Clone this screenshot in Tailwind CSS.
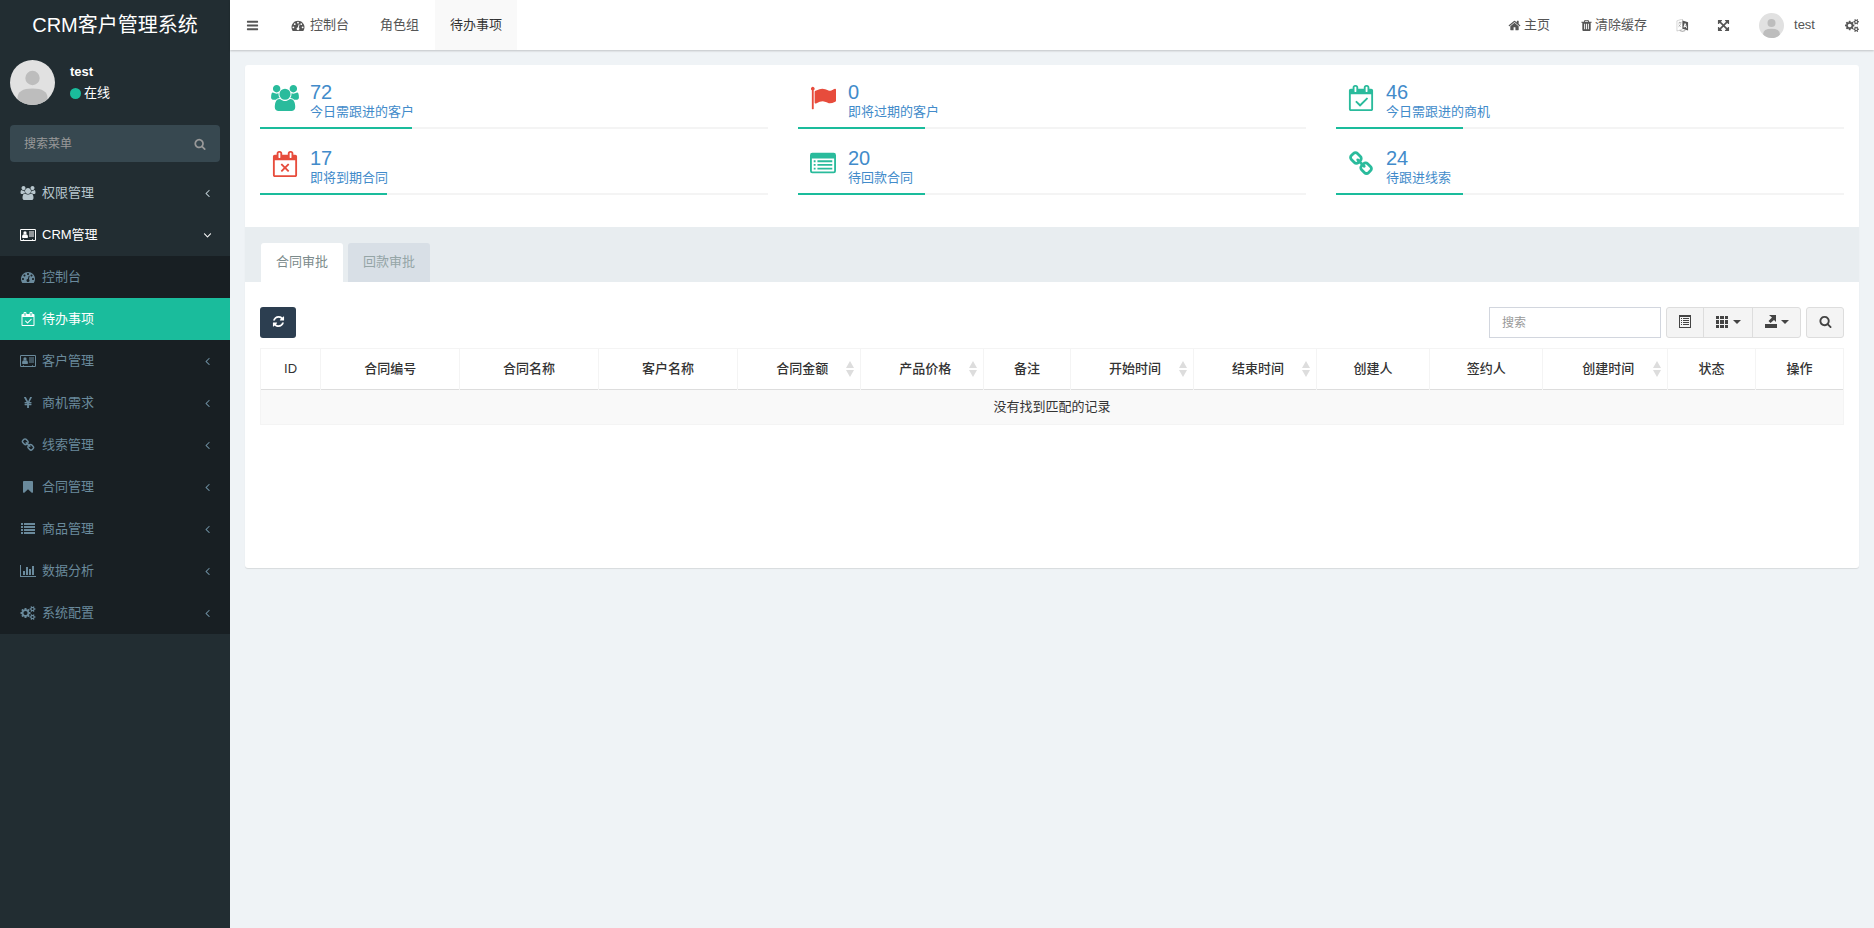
<!DOCTYPE html>
<html lang="zh-CN">
<head>
<meta charset="utf-8">
<title>CRM客户管理系统</title>
<script src="https://cdn.jsdelivr.net/npm/@tailwindcss/browser@4"></script>
</head>
<body class="flex min-h-screen bg-[#eff3f6] font-['Liberation_Sans','Noto_Sans_CJK_SC',sans-serif] text-[13px] leading-5 text-[#333]">
<svg class="hidden" aria-hidden="true">
  <symbol id="bars" viewBox="0 0 1792 1792"><path d="M1664 1344v128q0 26-19 45t-45 19h-1408q-26 0-45-19t-19-45v-128q0-26 19-45t45-19h1408q26 0 45 19t19 45zm0-512v128q0 26-19 45t-45 19h-1408q-26 0-45-19t-19-45v-128q0-26 19-45t45-19h1408q26 0 45 19t19 45zm0-512v128q0 26-19 45t-45 19h-1408q-26 0-45-19t-19-45v-128q0-26 19-45t45-19h1408q26 0 45 19t19 45z"/></symbol>
  <symbol id="dash" viewBox="0 0 1792 1792"><path d="M384 1152q0-53-37.5-90.5t-90.5-37.5-90.5 37.5-37.5 90.5 37.5 90.5 90.5 37.5 90.5-37.5 37.5-90.5zm192-448q0-53-37.5-90.5t-90.5-37.5-90.5 37.5-37.5 90.5 37.5 90.5 90.5 37.5 90.5-37.5 37.5-90.5zm428 481l101-382q6-26-7.5-48.5t-38.5-29.5-48 6.5-30 39.5l-101 382q-60 5-107 43.5t-63 98.5q-20 77 20 146t117 89 146-20 89-117q16-60-6-117t-72-91zm660-33q0-53-37.5-90.5t-90.5-37.5-90.5 37.5-37.5 90.5 37.5 90.5 90.5 37.5 90.5-37.5 37.5-90.5zm-640-640q0-53-37.5-90.5t-90.5-37.5-90.5 37.5-37.5 90.5 37.5 90.5 90.5 37.5 90.5-37.5 37.5-90.5zm448 192q0-53-37.5-90.5t-90.5-37.5-90.5 37.5-37.5 90.5 37.5 90.5 90.5 37.5 90.5-37.5 37.5-90.5zm320 448q0 261-141 483-19 29-54 29h-1402q-35 0-54-29-141-221-141-483 0-182 71-348t191-286 286-191 348-71 348 71 286 191 191 286 71 348z"/></symbol>
  <symbol id="search" viewBox="0 0 1792 1792"><path d="M1216 832q0-185-131.500-316.500t-316.500-131.500-316.500 131.500-131.500 316.500 131.500 316.500 316.500 131.500 316.500-131.500 131.500-316.500zm512 832q0 52-38 90t-90 38q-54 0-90-38l-343-342q-179 124-399 124-143 0-273.500-55.500t-225-150-150-225-55.500-273.500 55.500-273.500 150-225 225-150 273.500-55.500 273.500 55.500 225 150 150 225 55.500 273.500q0 220-124 399l343 343q37 37 37 90z"/></symbol>
  <symbol id="left" viewBox="0 0 1792 1792"><path d="M1203 544q0 13-10 23l-393 393 393 393q10 10 10 23t-10 23l-50 50q-10 10-23 10t-23-10l-466-466q-10-10-10-23t10-23l466-466q10-10 23-10t23 10l50 50q10 10 10 23z"/></symbol>
  <symbol id="down" viewBox="0 0 1792 1792"><path d="M1395 736q0 13-10 23l-466 466q-10 10-23 10t-23-10l-466-466q-10-10-10-23t10-23l50-50q10-10 23-10t23 10l393 393 393-393q10-10 23-10t23 10l50 50q10 10 10 23z"/></symbol>
  <symbol id="bookmark" viewBox="0 0 1792 1792"><path d="M1420 128q23 0 44 9 33 13 52.500 41t19.500 62v1289q0 34-19.500 62t-52.500 41q-19 8-44 8-48 0-83-32l-441-424-441 424q-36 33-83 33-23 0-44-9-33-13-52.500-41t-19.500-62v-1289q0-34 19.500-62t52.500-41q21-9 44-9h1048z"/></symbol>
  <symbol id="home" viewBox="0 0 1792 1792"><path d="M1472 992v480q0 26-19 45t-45 19h-384v-384h-256v384h-384q-26 0-45-19t-19-45v-480q0-1 .5-3t.5-3l575-474 575 474q1 2 1 6zm223-69l-62 74q-8 9-21 11h-3q-13 0-21-7l-692-577-692 577q-12 8-24 7-13-2-21-11l-62-74q-8-10-7-23.500t11-21.500l719-599q32-26 76-26t76 26l244 204v-195q0-14 9-23t23-9h192q14 0 23 9t9 23v408l219 182q10 8 11 21.500t-7 23.500z"/></symbol>
  <symbol id="refresh" viewBox="0 0 1792 1792"><path d="M1639 1056q0 5-1 7-64 268-268 434.500t-478 166.500q-146 0-282.500-55t-243.500-157l-129 129q-19 19-45 19t-45-19-19-45v-448q0-26 19-45t45-19h448q26 0 45 19t19 45-19 45l-137 137q71 66 161 102t187 36q134 0 250-65t186-179q11-17 53-117 8-23 30-23h192q13 0 22.500 9.500t9.500 22.500zm25-800v448q0 26-19 45t-45 19h-448q-26 0-45-19t-19-45 19-45l138-138q-148-137-349-137-134 0-250 65t-186 179q-11 17-53 117-8 23-30 23h-199q-13 0-22.500-9.500t-9.500-22.500v-7q65-268 270-434.500t480-166.500q146 0 284 55.500t245 156.500l130-129q19-19 45-19t45 19 19 45z"/></symbol>
  <symbol id="link" viewBox="0 0 1792 1792"><path d="M1520 1216q0-40-28-68l-208-208q-28-28-68-28-42 0-72 32 3 3 19 18.500t21.500 21.500 15 19 13 25.500 3.500 27.500q0 40-28 68t-68 28q-15 0-27.500-3.500t-25.500-13-19-15-21.500-21.500-18.500-19q-33 31-33 73 0 40 28 68l206 207q27 27 68 27 40 0 68-26l147-146q28-28 28-67zm-703-705q0-40-28-68l-206-207q-28-28-68-28-39 0-68 27l-147 146q-28 28-28 67 0 40 28 68l208 208q27 27 68 27 42 0 72-31-3-3-19-18.500t-21.500-21.500-15-19-13-25.500-3.500-27.500q0-40 28-68t68-28q15 0 27.500 3.500t25.500 13 19 15 21.500 21.500 18.500 19q33-31 33-73zm895 705q0 120-85 203l-147 146q-83 83-203 83-121 0-204-85l-206-207q-83-83-83-203 0-123 88-209l-88-88q-86 88-208 88-120 0-204-84l-208-208q-84-84-84-204t85-203l147-146q83-83 203-83 121 0 204 85l206 207q83 83 83 203 0 123-88 209l88 88q86-88 208-88 120 0 204 84l208 208q84 84 84 204z"/></symbol>
  <symbol id="flag" viewBox="0 0 1792 1792"><path d="M320 256q0 72-64 110v1266q0 13-9.500 22.500t-22.500 9.500h-64q-13 0-22.500-9.500t-9.500-22.500v-1266q-64-38-64-110 0-53 37.500-90.500t90.500-37.500 90.500 37.500 37.500 90.500zm1472 64v763q0 25-12.500 38.500t-39.500 27.500q-215 116-369 116-61 0-123.500-22t-108.500-48-115.500-48-142.500-22q-192 0-464 146-17 9-33 9-26 0-45-19t-19-45v-742q0-32 31-55 21-14 79-43 236-120 421-120 107 0 200 29t219 88q38 19 88 19 54 0 117.500-21t110-47 88-47 54.500-21q26 0 45 19t19 45z"/></symbol>
  <symbol id="users" viewBox="0 0 1920 1792"><path d="M593 896q-162 5-265 128h-134q-82 0-138-40.500t-56-118.500q0-353 124-353 6 0 43.500 21t97.500 42.500 119 21.500q67 0 133-23-5 37-5 66 0 139 81 256zm1071 637q0 120-73 189.500t-194 69.500h-874q-121 0-194-69.500t-73-189.500q0-53 3.500-103.500t14-109 26.500-108.500 43-97.500 62-81 85.500-53.500 111.500-20q10 0 43 21.500t73 48 107 48 135 21.500 135-21.500 107-48 73-48 43-21.500q61 0 111.500 20t85.500 53.500 62 81 43 97.500 26.500 108.500 14 109 3.500 103.500zm-1024-1277q0 106-75 181t-181 75-181-75-75-181 75-181 181-75 181 75 75 181zm704 384q0 159-112.500 271.500t-271.500 112.500-271.500-112.500-112.500-271.500 112.500-271.500 271.500-112.500 271.500 112.500 112.500 271.500zm576 225q0 78-56 118.500t-138 40.500h-134q-103-123-265-128 81-117 81-256 0-29-5-66 66 23 133 23 59 0 119-21.500t97.500-42.500 43.500-21q124 0 124 353zm-128-609q0 106-75 181t-181 75-181-75-75-181 75-181 181-75 181 75 75 181z"/></symbol>
  <symbol id="cal-check" viewBox="0 0 1664 1792"><path d="M1303 964l-512 512q-10 9-23 9t-23-9l-288-288q-9-10-9-23t9-22l46-46q9-9 22-9t23 9l220 220 444-444q10-9 23-9t22 9l46 46q9 9 9 22t-9 23zm-1175 700h1408v-1024h-1408v1024zm384-1216v-288q0-14-9-23t-23-9h-64q-14 0-23 9t-9 23v288q0 14 9 23t23 9h64q14 0 23-9t9-23zm768 0v-288q0-14-9-23t-23-9h-64q-14 0-23 9t-9 23v288q0 14 9 23t23 9h64q14 0 23-9t9-23zm384-64v1280q0 52-38 90t-90 38h-1408q-52 0-90-38t-38-90v-1280q0-52 38-90t90-38h128v-96q0-66 47-113t113-47h64q66 0 113 47t47 113v96h384v-96q0-66 47-113t113-47h64q66 0 113 47t47 113v96h128q52 0 90 38t38 90z"/></symbol>
  <symbol id="cal-times" viewBox="0 0 1664 1792"><path d="M1111 1385l-46 46q-9 9-22 9t-23-9l-188-189-188 189q-10 9-23 9t-22-9l-46-46q-9-9-9-22t9-23l189-188-189-188q-9-10-9-23t9-22l46-46q9-9 22-9t23 9l188 188 188-188q10-9 23-9t22 9l46 46q9 9 9 22t-9 23l-188 188 188 188q9 10 9 23t-9 22zM128 1664h1408v-1024h-1408v1024zm384-1216v-288q0-14-9-23t-23-9h-64q-14 0-23 9t-9 23v288q0 14 9 23t23 9h64q14 0 23-9t9-23zm768 0v-288q0-14-9-23t-23-9h-64q-14 0-23 9t-9 23v288q0 14 9 23t23 9h64q14 0 23-9t9-23zm384-64v1280q0 52-38 90t-90 38h-1408q-52 0-90-38t-38-90v-1280q0-52 38-90t90-38h128v-96q0-66 47-113t113-47h64q66 0 113 47t47 113v96h384v-96q0-66 47-113t113-47h64q66 0 113 47t47 113v96h128q52 0 90 38t38 90z"/></symbol>
  <symbol id="list-alt" viewBox="0 0 1792 1792"><path fill-rule="evenodd" d="M160 128h1472q160 0 160 160v1088q0 160-160 160h-1472q-160 0-160-160v-1088q0-160 160-160zM128 512v864q0 32 32 32h1472q32 0 32-32v-864zM256 640h128v128h-128zM256 896h128v128h-128zM256 1152h128v128h-128zM512 640h1024v128h-1024zM512 896h1024v128h-1024zM512 1152h1024v128h-1024z"/></symbol>
  <symbol id="card" viewBox="0 0 2048 1792"><path fill-rule="evenodd" d="M160 128h1728q160 0 160 160v1216q0 160-160 160h-1728q-160 0-160-160v-1216q0-160 160-160zM128 256v1248q0 32 32 32h224v-64q0-32 32-32h64q32 0 32 32v64h1024v-64q0-32 32-32h64q32 0 32 32v64h224q32 0 32-32v-1248z"/><circle cx="640" cy="640" r="210"/><path d="M500 800q140 110 280 0 244 20 244 340 0 140-120 140h-528q-120 0-120-140 0-320 244-340zM1152 448h640v128h-640zM1152 704h640v128h-640zM1152 960h640v128h-640z"/></symbol>
  <symbol id="yen" viewBox="0 0 1792 1792"><path d="M985.500 1536h-172q-13 0-22.500-9t-9.500-23v-330h-288q-13 0-22.500-9t-9.500-23v-103q0-13 9.500-22.500t22.500-9.500h288v-85h-288q-13 0-22.500-9t-9.500-23v-104q0-13 9.500-22.500t22.500-9.500h214l-321-578q-8-16 0-32 10-16 28-16h194q19 0 29 18l215 425q19 38 56 125 10-24 30.500-68t27.500-61l191-420q8-19 29-19h191q17 0 27 16 9 14 1 31l-313 579h215q13 0 22.500 9.500t9.500 22.500v104q0 14-9.500 23t-22.500 9h-290v85h290q13 0 22.500 9.500t9.500 22.500v103q0 14-9.500 23t-22.500 9h-290v330q0 13-9.500 22.500t-22.500 9.500z"/></symbol>
  <symbol id="list" viewBox="0 0 1792 1792"><path d="M0 128h256v256h-256zM384 128h1408v256h-1408zM0 512h256v256h-256zM384 512h1408v256h-1408zM0 896h256v256h-256zM384 896h1408v256h-1408zM0 1280h256v256h-256zM384 1280h1408v256h-1408z"/></symbol>
  <symbol id="chart" viewBox="0 0 2048 1792"><path d="M640 896v512h-256v-512h256zm384-512v1024h-256v-1024h256zm1024 1152v128h-2048v-1536h128v1408h1920zm-640-896v768h-256v-768h256zm384-384v1152h-256v-1152h256z"/></symbol>
  <symbol id="cogs" viewBox="0 0 1920 1792"><path d="M896 896q0-106-75-181t-181-75-181 75-75 181 75 181 181 75 181-75 75-181zm768 512q0-52-38-90t-90-38-90 38-38 90q0 53 37.500 90.500t90.500 37.500 90.500-37.500 37.500-90.500zm0-1024q0-52-38-90t-90-38-90 38-38 90q0 53 37.500 90.500t90.500 37.500 90.500-37.500 37.500-90.500zm-384 421v185q0 10-7 19.500t-16 10.500l-155 24q-11 35-32 76 34 48 90 115 7 11 7 20 0 12-7 19-23 30-82.500 89.500t-78.500 59.500q-11 0-21-7l-115-90q-37 19-77 31-11 108-23 155-7 24-30 24h-186q-11 0-20-7.500t-10-17.500l-23-153q-34-10-75-31l-118 89q-7 7-20 7-11 0-21-8-144-133-144-160 0-9 7-19 10-14 41-53t47-61q-23-44-35-82l-152-24q-10-1-17-9.500t-7-19.500v-185q0-10 7-19.500t16-10.500l155-24q11-35 32-76-34-48-90-115-7-11-7-20 0-12 7-20 22-30 82-89t79-59q11 0 21 7l115 90q34-18 77-32 11-108 23-154 7-24 30-24h186q11 0 20 7.500t10 17.500l23 153q34 10 75 31l118-89q8-7 20-7 11 0 21 8 144 133 144 160 0 8-7 19-12 16-42 54t-45 60q23 48 34 82l152 23q10 2 17 10.500t7 19.500zm640 533v140q0 16-149 31-12 27-30 52 51 113 51 138 0 4-4 7-122 71-124 71-8 0-46-47t-52-68q-20 2-30 2t-30-2q-14 21-52 68t-46 47q-2 0-124-71-4-3-4-7 0-25 51-138-18-25-30-52-149-15-149-31v-140q0-16 149-31 13-29 30-52-51-113-51-138 0-4 4-7 4-2 35-20t59-34 30-16q8 0 46 46.500t52 67.500q20-2 30-2t30 2q51-71 92-112l6-2q4 0 124 70 4 3 4 7 0 25-51 138 17 23 30 52 149 15 149 31zm0-1024v140q0 16-149 31-12 27-30 52 51 113 51 138 0 4-4 7-122 71-124 71-8 0-46-47t-52-68q-20 2-30 2t-30-2q-14 21-52 68t-46 47q-2 0-124-71-4-3-4-7 0-25 51-138-18-25-30-52-149-15-149-31v-140q0-16 149-31 13-29 30-52-51-113-51-138 0-4 4-7 4-2 35-20t59-34 30-16q8 0 46 46.500t52 67.500q20-2 30-2t30 2q51-71 92-112l6-2q4 0 124 70 4 3 4 7 0 25-51 138 17 23 30 52 149 15 149 31z"/></symbol>
  <symbol id="trash" viewBox="0 0 1792 1792"><path d="M704 1376v-704q0-14-9-23t-23-9h-64q-14 0-23 9t-9 23v704q0 14 9 23t23 9h64q14 0 23-9t9-23zm256 0v-704q0-14-9-23t-23-9h-64q-14 0-23 9t-9 23v704q0 14 9 23t23 9h64q14 0 23-9t9-23zm256 0v-704q0-14-9-23t-23-9h-64q-14 0-23 9t-9 23v704q0 14 9 23t23 9h64q14 0 23-9t9-23zm-544-992h448l-48-117q-7-9-17-11h-317q-10 2-17 11zm928 32v64q0 14-9 23t-23 9h-96v948q0 83-47 143.500t-113 60.500h-832q-66 0-113-58.500t-47-141.500v-952h-96q-14 0-23-9t-9-23v-64q0-14 9-23t23-9h309l70-167q15-37 54-63t79-26h320q40 0 79 26t54 63l70 167h309q14 0 23 9t9 23z"/></symbol>
  <symbol id="arrows" viewBox="0 0 1792 1792"><path d="M1411 541l-355 355 355 355 144-144q29-31 70-14 39 17 39 59v448q0 26-19 45t-45 19h-448q-42 0-59-40-17-39 14-69l144-144-355-355-355 355 144 144q31 30 14 69-17 40-59 40h-448q-26 0-45-19t-19-45v-448q0-42 40-59 39-17 69 14l144 144 355-355-355-355-144 144q-19 19-45 19-12 0-24-5-40-17-40-59v-448q0-26 19-45t45-19h448q42 0 59 40 17 39-14 69l-144 144 355 355 355-355-144-144q-31-30-14-69 17-40 59-40h448q26 0 45 19t19 45v448q0 42-39 59-13 5-25 5-26 0-45-19z"/></symbol>
  <symbol id="language" viewBox="0 0 14 14"><path d="M1 2l6-2v11l-6 2z" fill="none" stroke="currentColor" stroke-width=".5" opacity=".5"/><path d="M2.500 4.500l3.500-1M4 3v1.500M2.500 8.500q2.500-1.500 3-4.500M3 6q1 2 2.500 2.500" fill="none" stroke="currentColor" stroke-width=".6" opacity=".6"/><path fill-rule="evenodd" d="M7 1.500l6 2v9l-6-2zM9.300 4.500l-1.300 4.500 1 .3.300-1 1.300.4.400 1.100 1 .3-1.500-5.200zM9.900 6l.4 1.600-.8-.2z"/><path d="M4 12.500q3 1.500 6 0" fill="none" stroke="currentColor" stroke-width=".6"/></symbol>
  <symbol id="doc" viewBox="0 0 12 13"><path fill-rule="evenodd" d="M0 0h12v13h-12zM1 2h10v10h-10z"/><path d="M2 3h1v1h-1zM4 3h6v1h-6zM2 5h1v1h-1zM4 5h6v1h-6zM2 7h1v1h-1zM4 7h6v1h-6zM2 9h1v1h-1zM4 9h6v1h-6z"/></symbol>
  <symbol id="th" viewBox="0 0 12 12"><path d="M0 0h3v3h-3zM4 0h4v3h-4zM9 0h3v3h-3zM0 4h3v4h-3zM4 4h4v4h-4zM9 4h3v4h-3zM0 9h3v3h-3zM4 9h4v3h-4zM9 9h3v3h-3z"/></symbol>
  <symbol id="export" viewBox="0 0 12 13"><path d="M0 9h12v4h-12zM4 0h7v7l-2-2-3.500 3-2-2 3.500-3.500z"/></symbol>
  <symbol id="caret" viewBox="0 0 8 4"><path d="M0 0h8l-4 4z"/></symbol>
  <symbol id="sort" viewBox="0 0 8 16"><path d="M4 0l4 7h-8zM0 9h8l-4 7z"/></symbol>
  <symbol id="avatar" viewBox="0 0 45 45"><path fill="#e1e1e1" d="M0 0h45v45h-45z"/><circle cx="22.500" cy="18" r="7.200" fill="#bdbdbd"/><path fill="#bdbdbd" d="M7.500 38q0-9.500 15-9.500t15 9.500v7h-30z"/></symbol>
</svg>

<aside class="w-[230px] shrink-0 bg-[#222d32] text-white">
  <a href="#" class="flex h-[50px] items-center justify-center text-xl">CRM客户管理系统</a>
  <div class="flex gap-[15px] px-[10px] pt-[10px]">
    <svg class="size-[45px] rounded-full"><use href="#avatar"/></svg>
    <div class="flex flex-col gap-px pt-[2px]">
      <p class="font-bold">test</p>
      <a href="#" class="flex items-center gap-[3px]"><span class="size-[11px] rounded-full bg-[#1abc9c]"></span>在线</a>
    </div>
  </div>
  <form class="mx-[10px] mt-5 mb-[10px] flex h-[37px] items-center rounded bg-[#374850]">
    <input type="text" aria-label="搜索菜单" placeholder="搜索菜单" class="min-w-0 flex-1 px-[14px] text-xs outline-none placeholder:text-[#999]">
    <button type="button" aria-label="搜索" class="px-[14px] text-[#999]"><svg class="size-3 fill-current"><use href="#search"/></svg></button>
  </form>
  <nav>
    <a href="#" class="flex h-[42px] items-center gap-[6px] pr-4 pl-5 text-[#b8c7ce]"><svg class="h-[14px] w-4 fill-current"><use href="#users"/></svg><span class="flex-1">权限管理</span><svg class="h-4 w-[13px] fill-current"><use href="#left"/></svg></a>
    <a href="#" class="flex h-[42px] items-center gap-[6px] pr-4 pl-5"><svg class="h-[14px] w-4 fill-current"><use href="#card"/></svg><span class="flex-1">CRM管理</span><svg class="h-4 w-[13px] fill-current"><use href="#down"/></svg></a>
    <div class="bg-[#181f23] text-[#6a8a9c]">
      <a href="#" class="flex h-[42px] items-center gap-[6px] pr-4 pl-5"><svg class="h-[14px] w-4 fill-current"><use href="#dash"/></svg>控制台</a>
      <a href="#" class="flex h-[42px] items-center gap-[6px] bg-[#1abc9c] pr-4 pl-5 text-white"><svg class="h-[14px] w-4 fill-current"><use href="#cal-check"/></svg>待办事项</a>
      <a href="#" class="flex h-[42px] items-center gap-[6px] pr-4 pl-5"><svg class="h-[14px] w-4 fill-current"><use href="#card"/></svg><span class="flex-1">客户管理</span><svg class="h-4 w-[13px] fill-current"><use href="#left"/></svg></a>
      <a href="#" class="flex h-[42px] items-center gap-[6px] pr-4 pl-5"><svg class="h-[14px] w-4 fill-current"><use href="#yen"/></svg><span class="flex-1">商机需求</span><svg class="h-4 w-[13px] fill-current"><use href="#left"/></svg></a>
      <a href="#" class="flex h-[42px] items-center gap-[6px] pr-4 pl-5"><svg class="h-[14px] w-4 fill-current"><use href="#link"/></svg><span class="flex-1">线索管理</span><svg class="h-4 w-[13px] fill-current"><use href="#left"/></svg></a>
      <a href="#" class="flex h-[42px] items-center gap-[6px] pr-4 pl-5"><svg class="h-[14px] w-4 fill-current"><use href="#bookmark"/></svg><span class="flex-1">合同管理</span><svg class="h-4 w-[13px] fill-current"><use href="#left"/></svg></a>
      <a href="#" class="flex h-[42px] items-center gap-[6px] pr-4 pl-5"><svg class="h-[14px] w-4 fill-current"><use href="#list"/></svg><span class="flex-1">商品管理</span><svg class="h-4 w-[13px] fill-current"><use href="#left"/></svg></a>
      <a href="#" class="flex h-[42px] items-center gap-[6px] pr-4 pl-5"><svg class="h-[14px] w-4 fill-current"><use href="#chart"/></svg><span class="flex-1">数据分析</span><svg class="h-4 w-[13px] fill-current"><use href="#left"/></svg></a>
      <a href="#" class="flex h-[42px] items-center gap-[6px] pr-4 pl-5"><svg class="h-[14px] w-4 fill-current"><use href="#cogs"/></svg><span class="flex-1">系统配置</span><svg class="h-4 w-[13px] fill-current"><use href="#left"/></svg></a>
    </div>
  </nav>
</aside>

<div class="min-w-0 flex-1">
  <header class="flex h-[50px] justify-between bg-white text-[#555] shadow-[0_1px_2px_rgba(0,0,0,0.2)]">
    <div class="flex gap-px">
      <button type="button" aria-label="切换菜单" class="px-4"><svg class="size-[13px] fill-current"><use href="#bars"/></svg></button>
      <nav class="flex gap-px">
        <a href="#" class="flex items-center gap-[5px] px-[15px]"><svg class="h-[13px] w-[14px] fill-current"><use href="#dash"/></svg>控制台</a>
        <a href="#" class="flex items-center px-[15px]">角色组</a>
        <a href="#" class="flex items-center bg-[#f9f9f9] px-[15px] text-[#333]">待办事项</a>
      </nav>
    </div>
    <nav class="flex">
      <a href="#" class="flex items-center gap-[3px] px-[15px]"><svg class="size-[13px] fill-current"><use href="#home"/></svg>主页</a>
      <a href="#" class="flex items-center gap-[2px] px-[15px]"><svg class="size-[13px] fill-current"><use href="#trash"/></svg>清除缓存</a>
      <a href="#" aria-label="语言" class="flex items-center px-[14px]"><svg class="size-[13px] fill-current"><use href="#language"/></svg></a>
      <a href="#" aria-label="全屏" class="flex items-center px-[14px]"><svg class="size-[13px] fill-current"><use href="#arrows"/></svg></a>
      <a href="#" class="flex items-center gap-[10px] px-[15px]"><svg class="size-[25px] rounded-full"><use href="#avatar"/></svg>test</a>
      <a href="#" aria-label="设置" class="flex items-center px-[15px]"><svg class="h-[13px] w-[14px] fill-current"><use href="#cogs"/></svg></a>
    </nav>
  </header>

  <main class="p-[15px]">
    <div class="overflow-hidden rounded-[3px] bg-white shadow-[0_1px_1px_rgba(0,0,0,0.1)]">
      <section class="grid grid-cols-3 gap-x-[30px] gap-y-[2px] px-[15px] pb-8 text-[#428bca]">
        <div class="flex h-16 flex-col"><a href="#" class="flex flex-1 items-center gap-[10px] pt-1 pl-[10px]"><svg class="h-[26px] w-[30px] fill-[#2abb9c]"><use href="#users"/></svg><span class="flex flex-col pt-2"><span class="text-xl leading-5">72</span><span>今日需跟进的客户</span></span></a><div class="h-[2px] bg-[#f4f4f4]"><div class="h-full bg-[#1abc9c]" style="width:30%"></div></div></div>
        <div class="flex h-16 flex-col"><a href="#" class="flex flex-1 items-center gap-[10px] pt-1 pl-[10px]"><svg class="h-[26px] w-[30px] fill-[#e74c3c]"><use href="#flag"/></svg><span class="flex flex-col pt-2"><span class="text-xl leading-5">0</span><span>即将过期的客户</span></span></a><div class="h-[2px] bg-[#f4f4f4]"><div class="h-full bg-[#1abc9c]" style="width:25%"></div></div></div>
        <div class="flex h-16 flex-col"><a href="#" class="flex flex-1 items-center gap-[10px] pt-1 pl-[10px]"><svg class="h-[26px] w-[30px] fill-[#2abb9c]"><use href="#cal-check"/></svg><span class="flex flex-col pt-2"><span class="text-xl leading-5">46</span><span>今日需跟进的商机</span></span></a><div class="h-[2px] bg-[#f4f4f4]"><div class="h-full bg-[#1abc9c]" style="width:25%"></div></div></div>
        <div class="flex h-16 flex-col"><a href="#" class="flex flex-1 items-center gap-[10px] pt-1 pl-[10px]"><svg class="h-[26px] w-[30px] fill-[#e74c3c]"><use href="#cal-times"/></svg><span class="flex flex-col pt-2"><span class="text-xl leading-5">17</span><span>即将到期合同</span></span></a><div class="h-[2px] bg-[#f4f4f4]"><div class="h-full bg-[#1abc9c]" style="width:25%"></div></div></div>
        <div class="flex h-16 flex-col"><a href="#" class="flex flex-1 items-center gap-[10px] pt-1 pl-[10px]"><svg class="h-[26px] w-[30px] fill-[#2abb9c]"><use href="#list-alt"/></svg><span class="flex flex-col pt-2"><span class="text-xl leading-5">20</span><span>待回款合同</span></span></a><div class="h-[2px] bg-[#f4f4f4]"><div class="h-full bg-[#1abc9c]" style="width:25%"></div></div></div>
        <div class="flex h-16 flex-col"><a href="#" class="flex flex-1 items-center gap-[10px] pt-1 pl-[10px]"><svg class="h-[26px] w-[30px] fill-[#2abb9c]"><use href="#link"/></svg><span class="flex flex-col pt-2"><span class="text-xl leading-5">24</span><span>待跟进线索</span></span></a><div class="h-[2px] bg-[#f4f4f4]"><div class="h-full bg-[#1abc9c]" style="width:25%"></div></div></div>
      </section>

      <div role="tablist" class="flex gap-[5px] bg-[#e8edf0] px-4 pt-4">
        <button type="button" role="tab" aria-selected="true" class="h-[39px] rounded-t-[3px] bg-white px-[15px] pb-[2px] text-[#7b8a8b]">合同审批</button>
        <button type="button" role="tab" aria-selected="false" class="h-[39px] rounded-t-[3px] bg-[#d8dfe6] px-[15px] pb-[2px] text-[#95a5a6]">回款审批</button>
      </div>

      <section class="min-h-[286px] px-[15px] pt-[25px]">
        <div class="mb-[10px] flex h-[31px] justify-between">
          <button type="button" aria-label="刷新" class="flex w-9 items-center justify-center rounded-[3px] bg-[#2c3e50] pb-[2px] text-white"><svg class="size-[13px] fill-current"><use href="#refresh"/></svg></button>
          <div class="flex gap-[5px]">
            <input type="text" aria-label="搜索" placeholder="搜索" class="w-[172px] border border-[#d2d6de] px-3 text-xs outline-none placeholder:text-[#999]">
            <div class="flex divide-x divide-[#ddd] overflow-hidden rounded-[3px] border border-[#ddd] bg-[#f4f4f4] text-[#444]">
              <button type="button" aria-label="切换" class="flex w-[37px] items-center justify-center pb-[2px]"><svg class="h-[13px] w-3 fill-current"><use href="#doc"/></svg></button>
              <button type="button" aria-label="列" class="flex w-[49px] items-center justify-center gap-[5px] pb-[2px]"><svg class="size-3 fill-current"><use href="#th"/></svg><svg class="h-1 w-2 fill-current"><use href="#caret"/></svg></button>
              <button type="button" aria-label="导出" class="flex w-[47px] items-center justify-center gap-1 pb-[2px]"><svg class="h-[13px] w-3 fill-current"><use href="#export"/></svg><svg class="h-1 w-2 fill-current"><use href="#caret"/></svg></button>
            </div>
            <button type="button" aria-label="搜索" class="flex w-[38px] items-center justify-center rounded-[3px] border border-[#ddd] bg-[#f4f4f4] pb-[2px] text-[#444]"><svg class="size-[13px] fill-current"><use href="#search"/></svg></button>
          </div>
        </div>
        <table class="w-full table-fixed border-collapse border border-[#f4f4f4] text-center">
          <colgroup><col style="width:3.8%"><col style="width:8.780%"><col style="width:8.780%"><col style="width:8.780%"><col style="width:7.780%"><col style="width:7.760%"><col style="width:5.500%"><col style="width:7.760%"><col style="width:7.780%"><col style="width:7.120%"><col style="width:7.180%"><col style="width:7.860%"><col style="width:5.560%"><col style="width:5.560%"></colgroup>
          <thead>
            <tr class="h-[41px] border-b border-[#ddd] *:border-x *:border-x-[#f4f4f4] *:font-medium">
              <th>ID</th><th>合同编号</th><th>合同名称</th><th>客户名称</th>
              <th><div class="flex items-center pr-[6px] pl-5"><span class="flex-1">合同金额</span><svg class="h-4 w-2 fill-[#ddd]"><use href="#sort"/></svg></div></th>
              <th><div class="flex items-center pr-[6px] pl-5"><span class="flex-1">产品价格</span><svg class="h-4 w-2 fill-[#ddd]"><use href="#sort"/></svg></div></th>
              <th>备注</th>
              <th><div class="flex items-center pr-[6px] pl-5"><span class="flex-1">开始时间</span><svg class="h-4 w-2 fill-[#ddd]"><use href="#sort"/></svg></div></th>
              <th><div class="flex items-center pr-[6px] pl-5"><span class="flex-1">结束时间</span><svg class="h-4 w-2 fill-[#ddd]"><use href="#sort"/></svg></div></th>
              <th>创建人</th><th>签约人</th>
              <th><div class="flex items-center pr-[6px] pl-5"><span class="flex-1">创建时间</span><svg class="h-4 w-2 fill-[#ddd]"><use href="#sort"/></svg></div></th>
              <th>状态</th><th>操作</th>
            </tr>
          </thead>
          <tbody><tr class="h-[35px] bg-[#f9f9f9]"><td colspan="14">没有找到匹配的记录</td></tr></tbody>
        </table>
      </section>
    </div>
  </main>
</div>
</body>
</html>
